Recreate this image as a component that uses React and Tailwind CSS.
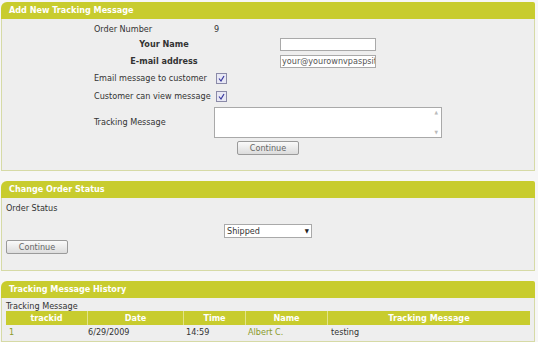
export default function App() {
  const font = { fontFamily: '"DejaVu Sans Condensed", "DejaVu Sans", Tahoma, sans-serif' };
  const btn =
    "h-[14px] w-[62px] border border-[#9a9a9a] rounded-[2px] bg-gradient-to-b from-[#fafafa] to-[#dcdcdc] text-[9px] leading-[12px] text-[#666] text-center";
  return (
    <div style={font} className="w-[538px] h-[342px] bg-[#f6f6f6] text-[#333] text-[9px] leading-[11px] overflow-hidden pt-[2px] pl-[1px] pr-[3px] flex flex-col">
      {/* Panel 1 */}
      <div className="flex flex-col">
        <div className="h-[17px] bg-[#c8cc2e] rounded-tl-[6px] rounded-tr-[2px] pl-[8px] flex items-center text-white font-bold text-[9px]">
          Add New Tracking Message
        </div>
        <div className="h-[152px] bg-[#eeeeee] border border-t-0 border-[#d6daa6] flex justify-center pt-[3px]">
          <div className="w-[348px] flex flex-col">
            <div className="flex h-[14px] items-center">
              <div className="w-[120px]">Order Number</div>
              <div>9</div>
            </div>
            <div className="flex h-[16px] items-center">
              <div className="w-[120px] text-center font-bold pl-[20px]">Your Name</div>
              <div className="flex-1 flex justify-center">
                <div className="w-[96px] h-[13px] bg-white border border-[#a9a9a9]" />
              </div>
            </div>
            <div className="flex h-[18px] items-center">
              <div className="w-[120px] text-center font-bold pl-[20px]">E-mail address</div>
              <div className="flex-1 flex justify-center">
                <div className="w-[96px] h-[13px] bg-white border border-[#a9a9a9] text-[#555] pl-[1px] leading-[11px] overflow-hidden whitespace-nowrap">
                  your@yourownvpaspsit
                </div>
              </div>
            </div>
            <div className="flex h-[16px] items-center">
              <div className="w-[122px]">Email message to customer</div>
              <Check />
            </div>
            <div className="flex h-[20px] items-center">
              <div className="w-[122px]">Customer can view message</div>
              <Check />
            </div>
            <div className="flex h-[32px] items-center">
              <div className="w-[120px]">Tracking Message</div>
              <div className="w-[229px] h-[31px] bg-white border border-[#a9a9a9] relative">
                <div className="absolute right-[3px] top-[2px] text-[#bbb] text-[5px] leading-[5px]">▲</div>
                <div className="absolute right-[3px] bottom-[2px] text-[#bbb] text-[5px] leading-[5px]">▼</div>
              </div>
            </div>
            <div className="flex justify-center pt-[3px]">
              <div className={btn}>Continue</div>
            </div>
          </div>
        </div>
      </div>

      {/* Panel 2 */}
      <div className="flex flex-col mt-[10px]">
        <div className="h-[17px] bg-[#c8cc2e] rounded-tl-[6px] rounded-tr-[2px] pl-[8px] flex items-center text-white font-bold text-[9px]">
          Change Order Status
        </div>
        <div className="h-[73px] bg-[#eeeeee] border border-t-0 border-[#d6daa6] pl-[4px] pt-[5px] flex flex-col">
          <div>Order Status</div>
          <div className="flex justify-center mt-[10px] pr-[4px]">
            <div className="w-[88px] h-[14px] bg-white border border-[#a9a9a9] flex items-center justify-between px-[2px]">
              <span>Shipped</span>
              <span className="text-[6px] leading-[6px] text-[#222]">▼</span>
            </div>
          </div>
          <div className="mt-[2px]">
            <div className={btn}>Continue</div>
          </div>
        </div>
      </div>

      {/* Panel 3 */}
      <div className="flex flex-col mt-[10px]">
        <div className="h-[17px] bg-[#c8cc2e] rounded-tl-[6px] rounded-tr-[2px] pl-[8px] flex items-center text-white font-bold text-[9px]">
          Tracking Message History
        </div>
        <div className="h-[44px] bg-[#eeeeee] border border-t-0 border-[#d6daa6] px-[4px] pt-[3px] flex flex-col">
          <div className="leading-[10px]">Tracking Message</div>
          <div className="flex h-[14px] bg-[#c8cc2e] text-white font-bold items-center">
            <div className="w-[82px] text-center border-r border-[#e2e48a] h-full flex items-center justify-center">trackid</div>
            <div className="w-[96px] text-center border-r border-[#e2e48a] h-full flex items-center justify-center">Date</div>
            <div className="w-[62px] text-center border-r border-[#e2e48a] h-full flex items-center justify-center">Time</div>
            <div className="w-[82px] text-center border-r border-[#e2e48a] h-full flex items-center justify-center">Name</div>
            <div className="flex-1 text-center h-full flex items-center justify-center">Tracking Message</div>
          </div>
          <div className="flex h-[15px] items-center">
            <div className="w-[82px] pl-[3px] text-[#8a9a2a]">1</div>
            <div className="w-[96px]">6/29/2009</div>
            <div className="w-[62px] pl-[2px]">14:59</div>
            <div className="w-[82px] pl-[2px] text-[#8a9a2a]">Albert C.</div>
            <div className="flex-1 pl-[3px]">testing</div>
          </div>
        </div>
      </div>
    </div>
  );
}

function Check() {
  return (
    <div className="w-[11px] h-[11px] bg-[#e8e8f4] border border-[#8a8aa8] flex items-center justify-center">
      <svg width="7" height="7" viewBox="0 0 7 7">
        <path d="M1 3.5 L3 6 L6 1" fill="none" stroke="#3a3aa0" strokeWidth="1.2" />
      </svg>
    </div>
  );
}
